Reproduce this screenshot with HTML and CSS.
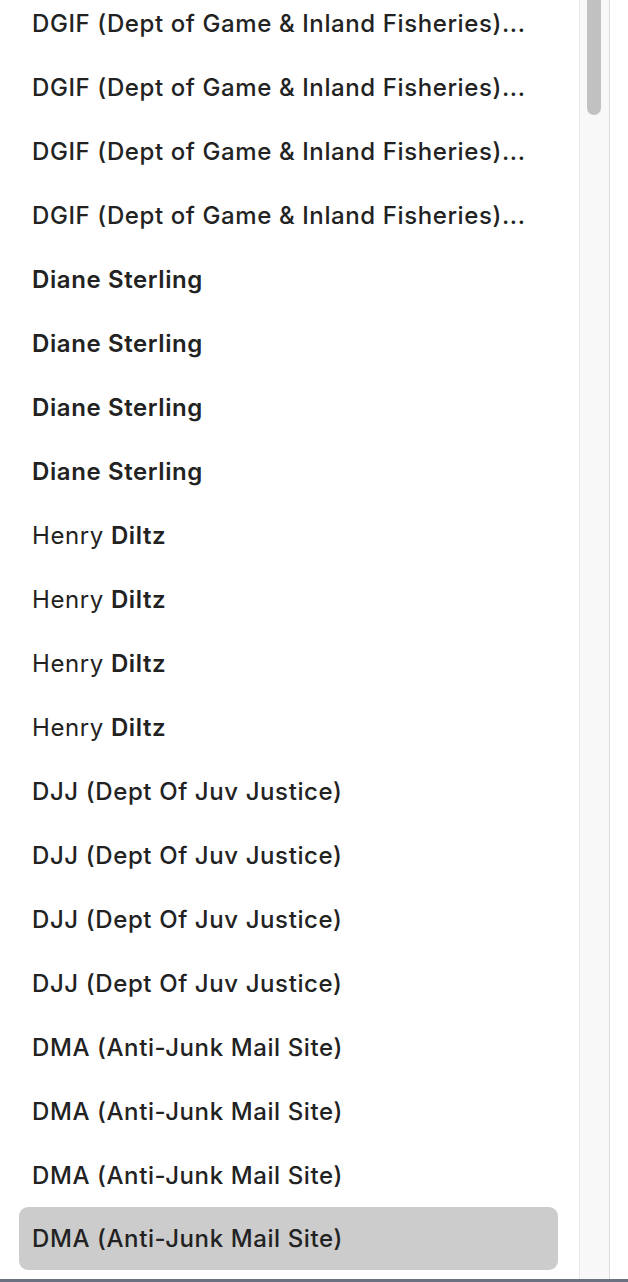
FILE: index.html
```html
<!DOCTYPE html>
<html>
<head>
<meta charset="utf-8">
<link rel="stylesheet" href="styles.css">
</head>
<body>
<div class="frame">
  <div class="viewport">
    <ul class="list">
      <li class="item medium">DGIF (Dept of Game &amp; Inland Fisheries)...</li>
      <li class="item medium">DGIF (Dept of Game &amp; Inland Fisheries)...</li>
      <li class="item medium">DGIF (Dept of Game &amp; Inland Fisheries)...</li>
      <li class="item medium">DGIF (Dept of Game &amp; Inland Fisheries)...</li>
      <li class="item semi">Diane Sterling</li>
      <li class="item semi">Diane Sterling</li>
      <li class="item semi">Diane Sterling</li>
      <li class="item semi">Diane Sterling</li>
      <li class="item"><span class="first">Henry</span> <span class="last">Diltz</span></li>
      <li class="item"><span class="first">Henry</span> <span class="last">Diltz</span></li>
      <li class="item"><span class="first">Henry</span> <span class="last">Diltz</span></li>
      <li class="item"><span class="first">Henry</span> <span class="last">Diltz</span></li>
      <li class="item medium">DJJ (Dept Of Juv Justice)</li>
      <li class="item medium">DJJ (Dept Of Juv Justice)</li>
      <li class="item medium">DJJ (Dept Of Juv Justice)</li>
      <li class="item medium">DJJ (Dept Of Juv Justice)</li>
      <li class="item medium">DMA (Anti-Junk Mail Site)</li>
      <li class="item medium">DMA (Anti-Junk Mail Site)</li>
      <li class="item medium">DMA (Anti-Junk Mail Site)</li>
      <li class="item medium selected">DMA (Anti-Junk Mail Site)</li>
    </ul>
  </div>
  <div class="scrolltrack">
    <div class="thumb"></div>
  </div>
  <div class="gutter"></div>
</div>
</body>
</html>
```

FILE: styles.css
```css
html, body {
  margin: 0;
  padding: 0;
  background: #ffffff;
}

body {
  font-family: Inter, "Noto Sans", "Liberation Sans", sans-serif;
  color: #222222;
}

.frame {
  display: flex;
  height: 1279px;
  border-bottom: 3px solid #6b7180;
  overflow: hidden;
}

.viewport {
  width: 579px;
  overflow: hidden;
}

.list {
  list-style: none;
  margin: -9px 0 0 0;
  padding: 0;
}

.item {
  height: 64px;
  margin: 0 21px 0 19px;
  padding: 0 13px;
  display: flex;
  align-items: center;
  font-size: 24px;
  letter-spacing: 0.6px;
  border-radius: 9px;
  white-space: nowrap;
}

.medium {
  font-weight: 500;
}

.semi {
  font-weight: 600;
}

.first {
  font-weight: 400;
  margin-right: 7px;
}

.last {
  font-weight: 600;
}

.selected {
  background: #cccccc;
  height: 63px;
  margin-top: 0;
}

.scrolltrack {
  flex: none;
  background: #f8f8f8;
  border-left: 1px solid #e8e8e8;
  border-right: 1px solid #dcdcdc;
  box-sizing: border-box;
  width: 31px;
  padding-left: 7px;
}

.thumb {
  width: 14px;
  height: 115px;
  background: #c1c1c1;
  border-radius: 0 0 7px 7px;
}

.gutter {
  flex: 1;
  background: #ffffff;
}
```
